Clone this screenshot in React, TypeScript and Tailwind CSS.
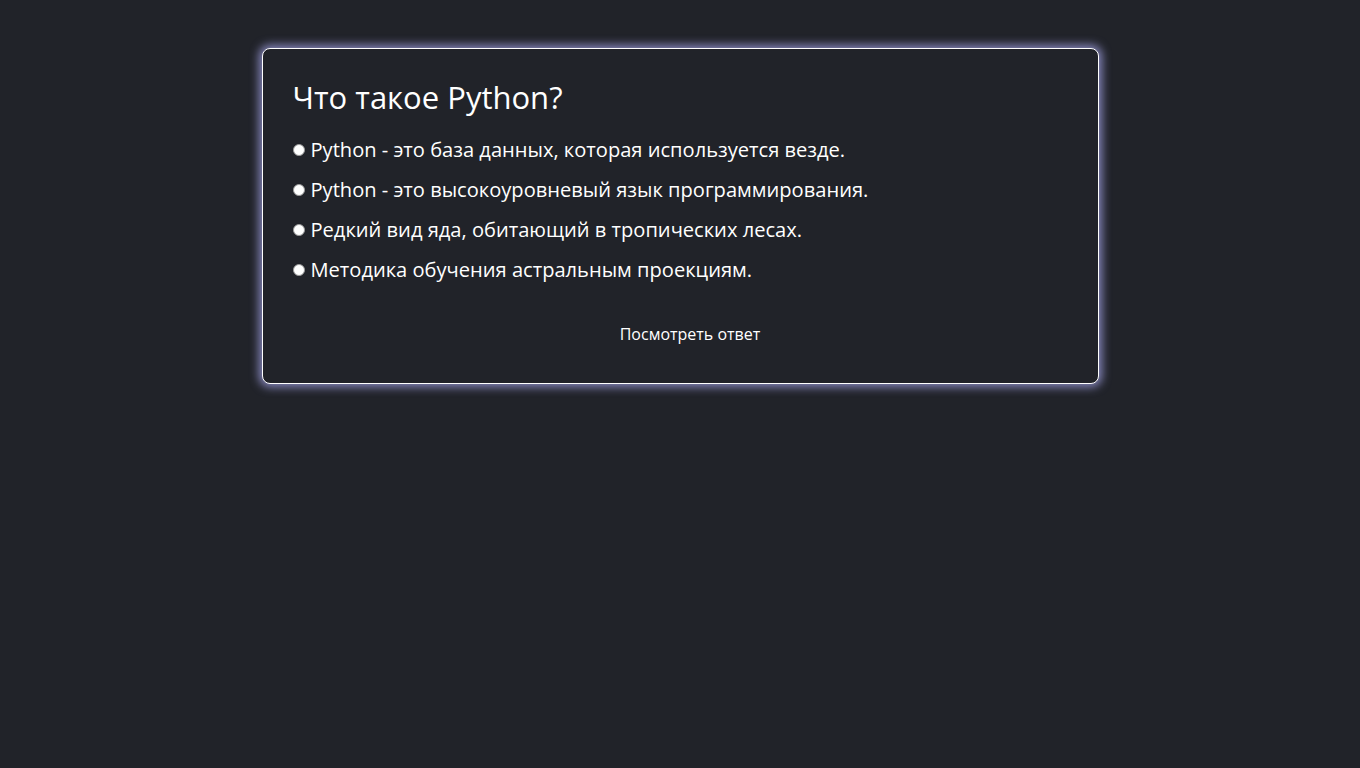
import React from 'react';

const options = [
  'Python - это база данных, которая используется везде.',
  'Python - это высокоуровневый язык программирования.',
  'Редкий вид яда, обитающий в тропических лесах.',
  'Методика обучения астральным проекциям.',
];

export default function App() {
  return (
    <div className="min-h-screen w-full bg-[#212329] pt-12 font-['Open_Sans',sans-serif] text-white">
      <div className="mx-auto w-[837px] rounded-lg border border-white bg-[#212329] px-[30px] pt-[26px] pb-[37px] shadow-[0_0_10px_3px_rgba(170,170,240,0.75)]">
        <h1 className="mb-[11px] text-[31px] font-medium leading-[44px]">Что такое Python?</h1>
        <div className="flex flex-col">
          {options.map((o) => (
            <label key={o} className="flex h-10 items-center gap-[6px] text-[20.1px]">
              <span className="h-3 w-3 rounded-full border border-[#9a9a9a] bg-white" />
              <span>{o}</span>
            </label>
          ))}
        </div>
        <div className="mt-[32px] flex justify-center">
          <button className="ml-5 text-[16px] leading-6 text-white">Посмотреть ответ</button>
        </div>
      </div>
    </div>
  );
}
